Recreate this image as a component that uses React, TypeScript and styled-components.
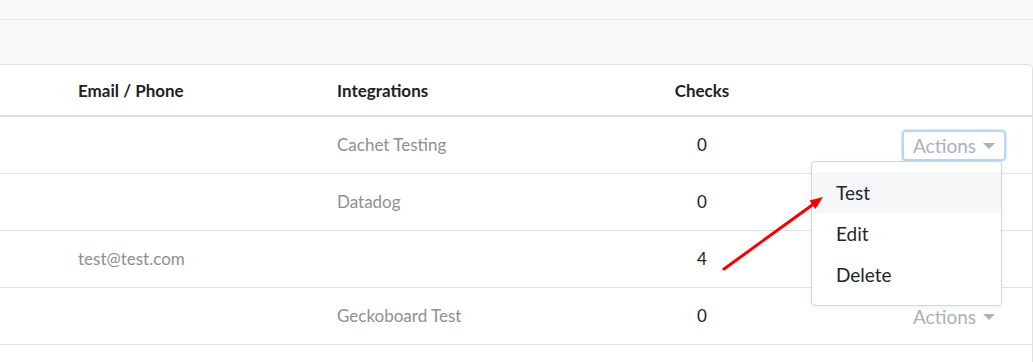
import React from "react"
import styled, { createGlobalStyle } from "styled-components"

const GlobalStyle = createGlobalStyle`
  html, body {
    margin: 0;
    padding: 0;
    background: #f7f8fa;
    font-family: Lato, "Open Sans", sans-serif;
    overflow: hidden;
  }
`

const Page = styled.div`
  position: relative;
  display: flex;
  flex-direction: column;
  width: 1033px;
  height: 362px;
  background: #f7f8fa;
`

const TopBar = styled.div`
  height: 19px;
  border-bottom: 1px solid #e1e4e8;
`

const SubBar = styled.div`
  height: 44px;
`

const Card = styled.div`
  flex: 1;
  width: 1032px;
  background: #fff;
  border-top: 1px solid #dfe3e7;
  border-right: 1px solid #dfe3e7;
  border-top-right-radius: 5px;
`

const Row = styled.div<{ $head?: boolean }>`
  display: grid;
  grid-template-columns: 78px 259px 303px 124px 1fr;
  align-items: center;
  height: ${(p) => (p.$head ? "50px" : "56px")};
  border-bottom: ${(p) => (p.$head ? "2px solid #dde1e5" : "1px solid #e0e4e8")};
`

const HeadCell = styled.div<{ $center?: boolean }>`
  font-size: 17px;
  font-weight: 700;
  color: #1e2125;
  text-align: ${(p) => (p.$center ? "center" : "left")};
`

const Cell = styled.div`
  font-size: 17px;
  color: #8b9096;
  margin-top: -2px;
`

const Count = styled.div`
  font-size: 17px;
  color: #1e2125;
  text-align: center;
  margin-top: -2px;
`

const ActionCell = styled.div`
  display: flex;
  justify-content: flex-end;
  padding-right: 26px;
`

const ActionWrap = styled.div`
  position: relative;
`

const ActionButton = styled.div<{ $focused?: boolean }>`
  display: flex;
  align-items: center;
  gap: 7px;
  height: 31px;
  box-sizing: border-box;
  padding: 0 9px;
  border: 2px solid ${(p) => (p.$focused ? "#b9d6f0" : "transparent")};
  border-radius: 4px;
  box-shadow: ${(p) => (p.$focused ? "0 0 0 1px rgba(185, 214, 240, 0.55)" : "none")};
  font-size: 19px;
  color: #aab2bc;
`

const Caret = styled.span`
  width: 0;
  height: 0;
  border-left: 6px solid transparent;
  border-right: 6px solid transparent;
  border-top: 6px solid #aab2bc;
  margin-top: 2px;
`

const Menu = styled.div`
  position: absolute;
  top: 100%;
  right: 4px;
  width: 191px;
  box-sizing: border-box;
  padding: 10px 0;
  background: #fff;
  border: 1px solid #d3d7db;
  border-radius: 4px;
  box-shadow: 0 2px 6px rgba(0, 0, 0, 0.06);
  z-index: 2;
`

const MenuItem = styled.div<{ $active?: boolean }>`
  height: 41px;
  display: flex;
  align-items: center;
  padding-left: 24px;
  font-size: 19px;
  color: #212529;
  background: ${(p) => (p.$active ? "#f6f7f9" : "transparent")};
`

const Arrow = styled.svg`
  position: absolute;
  left: 0;
  top: 0;
  pointer-events: none;
  z-index: 3;
`

const rows = [
  { email: "", integration: "Cachet Testing", checks: 0, open: true },
  { email: "", integration: "Datadog", checks: 0, hidden: true },
  { email: "test@test.com", integration: "", checks: 4, hidden: true },
  { email: "", integration: "Geckoboard Test", checks: 0 }
]

const App: React.FC = () => {
  return (
    <Page>
      <GlobalStyle />
      <TopBar />
      <SubBar />
      <Card>
        <Row $head>
          <div />
          <HeadCell>Email / Phone</HeadCell>
          <HeadCell>Integrations</HeadCell>
          <HeadCell $center>Checks</HeadCell>
          <div />
        </Row>
        {rows.map((r, i) => (
          <Row key={i}>
            <div />
            <Cell>{r.email}</Cell>
            <Cell>{r.integration}</Cell>
            <Count>{r.checks}</Count>
            <ActionCell>
              {!r.hidden && (
                <ActionWrap>
                  <ActionButton $focused={r.open}>
                    Actions <Caret />
                  </ActionButton>
                  {r.open && (
                    <Menu>
                      <MenuItem $active>Test</MenuItem>
                      <MenuItem>Edit</MenuItem>
                      <MenuItem>Delete</MenuItem>
                    </Menu>
                  )}
                </ActionWrap>
              )}
            </ActionCell>
          </Row>
        ))}
      </Card>
      <Arrow width="1033" height="362">
        <line x1="724" y1="269" x2="813" y2="204.5" stroke="#f40000" strokeWidth="3" strokeLinecap="round" />
        <polygon points="823,197 815.5,209 809.5,200.5" fill="#f40000" />
      </Arrow>
    </Page>
  )
}

export default App
